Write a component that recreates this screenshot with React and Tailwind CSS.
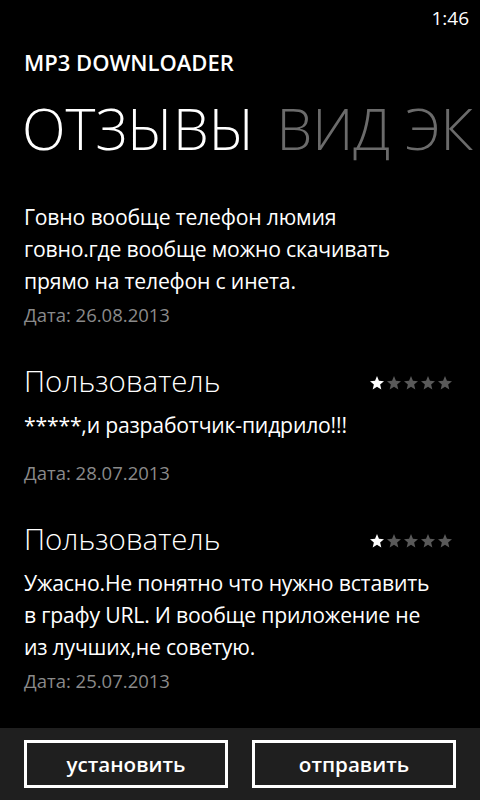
import React from "react";

const reviews = [
  {
    author: null,
    lines: ["Говно вообще телефон люмия", "говно.где вообще можно скачивать", "прямо на телефон с инета."],
    date: "26.08.2013",
  },
  {
    author: "Пользователь",
    rating: 1,
    lines: ["*****,и разработчик-пидрило!!!"],
    date: "28.07.2013",
    gap: true,
  },
  {
    author: "Пользователь",
    rating: 1,
    lines: ["Ужасно.Не понятно что нужно вставить", "в графу URL. И вообще приложение не", "из лучших,не советую."],
    date: "25.07.2013",
  },
];

const Star = ({ on }) => (
  <svg width="16" height="16" viewBox="0 0 24 24" className={on ? "text-white" : "text-[#595959]"}>
    <polygon
      fill="currentColor"
      points="12,1.5 14.9,8.6 22.5,9.2 16.7,14.2 18.5,21.7 12,17.6 5.5,21.7 7.3,14.2 1.5,9.2 9.1,8.6"
    />
  </svg>
);

const Stars = ({ rating }) => (
  <div className="flex gap-[1px]">
    {[0, 1, 2, 3, 4].map((i) => (
      <Star key={i} on={i < rating} />
    ))}
  </div>
);

const Review = ({ review }) => (
  <div className="flex flex-col">
    {review.author && (
      <div className="flex items-start justify-between pr-[27px] mb-[8px]">
        <span className="text-[29.5px] font-light leading-[40px] text-white">{review.author}</span>
        <div className="pt-[14px]">
          <Stars rating={review.rating} />
        </div>
      </div>
    )}
    <div className="flex flex-col text-[21.2px] leading-[32px] tracking-[-0.2px] text-white whitespace-nowrap">
      {review.lines.map((l, i) => (
        <span key={i}>{l}</span>
      ))}
    </div>
    <p className={`text-[18.5px] leading-[28px] text-[#8a8a8a] ${review.gap ? "mt-[18px]" : "mt-[4px]"}`}>
      Дата: {review.date}
    </p>
  </div>
);

export default function App() {
  return (
    <div
      className="w-[480px] h-[800px] bg-black flex flex-col overflow-hidden text-white"
      style={{ fontFamily: '"Open Sans", "Noto Sans", sans-serif' }}
    >
      <div className="h-[36px] flex justify-end items-center pr-[11px] text-[19px]">1:46</div>

      <div className="pl-[24px] pt-[13px] text-[22px] font-semibold leading-[26px]">MP3 DOWNLOADER</div>

      <div className="pl-[22px] mt-[22px] flex gap-[22px] whitespace-nowrap text-[57px] font-light leading-[62px]">
        <span className="text-white shrink-0">ОТЗЫВЫ</span>
        <span className="text-[#6b6b6b] shrink-0">ВИД ЭК</span>
      </div>

      <div className="flex-1 pl-[24px] pt-[42px] flex flex-col gap-[32px]">
        {reviews.map((r, i) => (
          <Review key={i} review={r} />
        ))}
      </div>

      <div className="h-[72px] bg-[#1f1f1f] flex gap-[24px] px-[24px] pt-[12px]">
        <button className="w-[204px] h-[48px] border-[3px] border-white text-[20.6px] font-semibold text-white">
          установить
        </button>
        <button className="w-[204px] h-[48px] border-[3px] border-white text-[20.6px] font-semibold text-white">
          отправить
        </button>
      </div>
    </div>
  );
}
